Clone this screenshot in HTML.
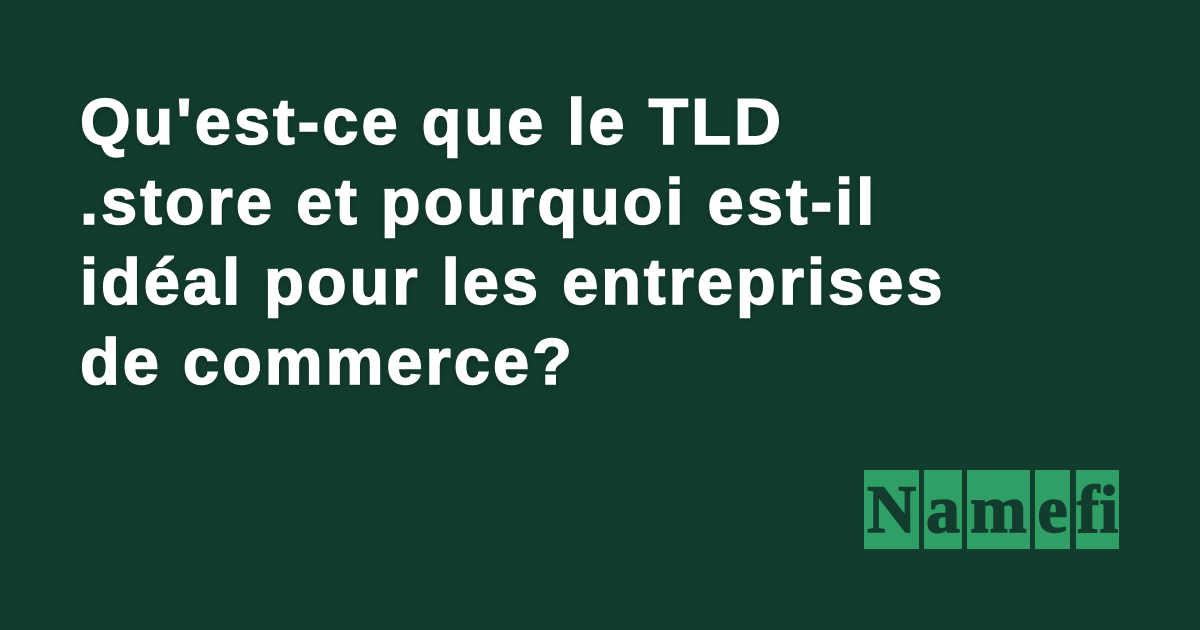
<!DOCTYPE html>
<html><head><meta charset="utf-8"><style>
html,body{margin:0;padding:0}
body{width:1200px;height:630px;background:#123d2e;position:relative;overflow:hidden;font-family:"Liberation Sans",sans-serif}
.t{position:absolute;left:80px;top:82px;color:#fff;font-weight:700;font-size:65px;line-height:80px;letter-spacing:3px;-webkit-text-stroke:1.5px #fff;text-shadow:0 2px 8px rgba(0,0,0,0.3);white-space:nowrap}
.b{position:absolute;top:470px;height:79px;background:#2f9f66;color:#123d2e;font-family:"Liberation Serif",serif;font-weight:700;font-size:68px;line-height:79px;text-align:center;-webkit-text-stroke:1.5px #123d2e}
</style></head><body>
<div class="t">Qu'est-ce que le TLD<br>.store et pourquoi est-il<br>idéal pour les entreprises<br>de commerce?</div>
<div class="b" style="left:864px;width:55px">N</div>
<div class="b" style="left:924px;width:38px">a</div>
<div class="b" style="left:967px;width:63px">m</div>
<div class="b" style="left:1035px;width:35px">e</div>
<div class="b" style="left:1076px;width:43px">fi</div>
</body></html>
